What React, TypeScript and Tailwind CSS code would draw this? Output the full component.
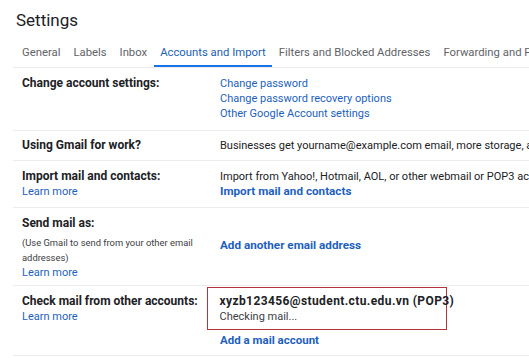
import React from "react";

const link = "text-[#1d5fc0]";

function Row({ left, right, className = "", rightClass = "" }: { left: React.ReactNode; right: React.ReactNode; className?: string; rightClass?: string }) {
  return (
    <div className={"flex border-b border-[#ececec] " + className}>
      <div className="w-[207px] shrink-0 pl-[9px] py-[8px] whitespace-nowrap">{left}</div>
      <div className={"flex-1 whitespace-nowrap " + rightClass}>{right}</div>
    </div>
  );
}

const label = "font-bold text-[12px] leading-[15px]";

export default function App() {
  const tabs = ["General", "Labels", "Inbox", "Accounts and Import", "Filters and Blocked Addresses", "Forwarding and POP/IMAP"];
  return (
    <div className="w-[529px] h-[358px] overflow-hidden bg-white font-['Roboto',sans-serif] text-[11px] leading-[15px] text-[#202124]">
      <div className="pl-4 pt-[8px] h-[38px] text-[17px] leading-[24px] text-[#202124]">Settings</div>
      <div className="ml-[13px] flex h-[30px] border-b border-[#ececec] whitespace-nowrap text-[11.3px] text-[#5f6368]">
        {tabs.map((t) => (
          <div
            key={t}
            className={
              "px-[6.5px] pt-[7px] first:pl-[9px] " +
              (t === "Accounts and Import" ? "border-b-2 border-[#1a73e8] text-[#1a5fb4]" : "")
            }
          >
            {t}
          </div>
        ))}
      </div>
      <div className="ml-[13px]">
        <Row
          className="h-[63px]"
          rightClass="py-[8px]"
          left={<div className={label}>Change account settings:</div>}
          right={
            <div className={link}>
              <div>Change password</div>
              <div>Change password recovery options</div>
              <div>Other Google Account settings</div>
            </div>
          }
        />
        <Row
          className="h-[30px]"
          rightClass="py-[7px]"
          left={<div className={label + " -mt-[1px]"}>Using Gmail for work?</div>}
          right={<div>Businesses get yourname@example.com email, more storage, and more</div>}
        />
        <Row
          className="h-[47px]"
          rightClass="py-[8px]"
          left={
            <>
              <div className={label}>Import mail and contacts:</div>
              <div className={link}>Learn more</div>
            </>
          }
          right={
            <>
              <div>Import from Yahoo!, Hotmail, AOL, or other webmail or POP3 accounts.</div>
              <div className={"font-bold text-[11.7px] " + link}>Import mail and contacts</div>
            </>
          }
        />
        <Row
          className="h-[78px]"
          rightClass="flex items-center"
          left={
            <>
              <div className={label}>Send mail as:</div>
              <div className="mt-[4px] text-[9.4px] leading-[15px] text-[#3c4043]">
                <div>(Use Gmail to send from your other email</div>
                <div>addresses)</div>
              </div>
              <div className={link}>Learn more</div>
            </>
          }
          right={<div className={"font-bold text-[11.7px] mt-[-2px] " + link}>Add another email address</div>}
        />
        <Row
          className="h-[70px]"
          rightClass="pt-[1px]"
          left={
            <>
              <div className={label}>Check mail from other accounts:</div>
              <div className={link}>Learn more</div>
            </>
          }
          right={
            <>
              <div className="-ml-[13px] w-[240px] border-[1.5px] border-[#b5333c] pl-[11.5px] pt-[6px] pb-[5px]">
                <div className="font-bold text-[12px] tracking-[0.4px]">xyzb123456@student.ctu.edu.vn (POP3)</div>
                <div className="text-[#3c4043]">Checking mail...</div>
              </div>
              <div className={"mt-[3px] font-bold text-[11.5px] " + link}>Add a mail account</div>
            </>
          }
        />
      </div>
    </div>
  );
}
